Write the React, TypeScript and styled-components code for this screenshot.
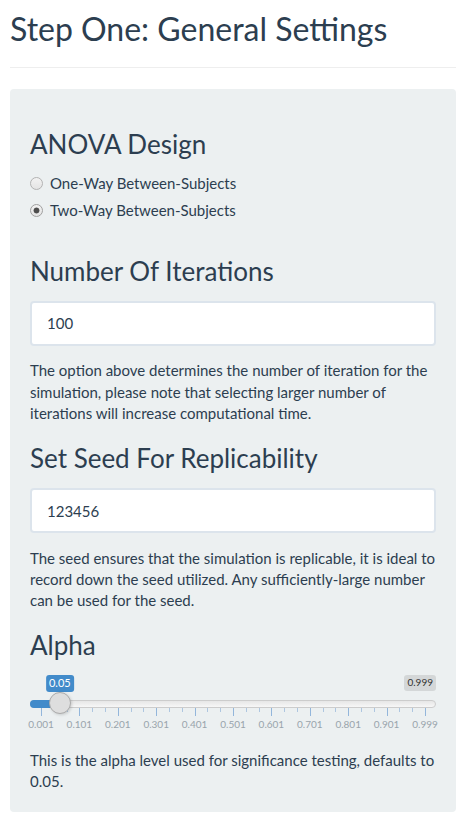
import styled, { createGlobalStyle } from "styled-components";

const GlobalStyle = createGlobalStyle`
  *, *::before, *::after {
    box-sizing: border-box;
  }
  html, body {
    margin: 0;
    padding: 0;
    background: #ffffff;
  }
  body {
    font-family: Lato, "Noto Sans", sans-serif;
    font-size: 15px;
    line-height: 1.428571;
    color: #2c3e50;
  }
`;

const Page = styled.div`
  padding: 0 16px 0 10px;
`;

const PageTitle = styled.h2`
  margin: 10.5px 0 0;
  font-size: 32px;
  line-height: 1.1;
  font-weight: 400;
`;

const Rule = styled.hr`
  margin: 21px 0;
  height: 0;
  border: 0;
  border-top: 1px solid #eeeeee;
`;

const Well = styled.div`
  display: flex;
  flex-direction: column;
  background: #ecf0f1;
  border: 1px solid transparent;
  border-radius: 4px;
  padding: 19px 19px 18px;
`;

const SectionTitle = styled.h3<{ $top: number }>`
  margin: ${(p) => p.$top}px 0 0;
  font-size: 26px;
  line-height: 1.1;
  font-weight: 400;
`;

const RadioList = styled.div`
  display: flex;
  flex-direction: column;
  gap: 5px;
  margin-top: 14.5px;
`;

const RadioLabel = styled.label`
  display: flex;
  align-items: flex-start;
  gap: 7px;
  min-height: 21px;
  line-height: 21.43px;
  cursor: pointer;
`;

const RadioInput = styled.input`
  appearance: none;
  flex: none;
  width: 13px;
  height: 13px;
  margin: 4px 0 0;
  border: 1px solid #b3b3b3;
  border-radius: 50%;
  background: linear-gradient(#f2f2f2, #e4e4e4);

  &:checked {
    background: radial-gradient(circle, #4d4d4d 0 2.6px, transparent 3.3px),
      linear-gradient(#f2f2f2, #e4e4e4);
    border-color: #a0a0a0;
  }
`;

const TextInput = styled.input`
  display: block;
  width: 100%;
  height: 45px;
  margin-top: 15.5px;
  padding: 10px 15px;
  border: 2px solid #dce4ec;
  border-radius: 4px;
  background: #ffffff;
  font-family: inherit;
  font-size: 15px;
  color: #2c3e50;
  outline: none;
`;

const HelpText = styled.p`
  margin: 14.5px 0 0;
`;

/* range slider */

const SliderRoot = styled.div`
  position: relative;
  height: 60px;
  margin-top: 15.5px;
`;

const SliderLine = styled.div`
  position: absolute;
  top: 25px;
  left: 0;
  right: 0;
  height: 8px;
  border: 1px solid #cccccc;
  border-radius: 8px;
  background: linear-gradient(to bottom, #dedede -50%, #ffffff 150%);
`;

const SliderBar = styled.div`
  position: absolute;
  top: 25px;
  left: 0;
  height: 8px;
  border-radius: 8px 0 0 8px;
  background: #428bca;
`;

const SliderHandle = styled.div`
  position: absolute;
  top: 17px;
  width: 22px;
  height: 22px;
  border: 1px solid #ababab;
  border-radius: 50%;
  background: #dedede;
  box-shadow: 1px 1px 3px rgba(0, 0, 0, 0.15);
  transform: translateX(-50%);
`;

const Bubble = styled.span<{ $primary?: boolean }>`
  position: absolute;
  top: 0;
  padding: 1px 3px;
  border-radius: 3px;
  font-size: ${(p) => (p.$primary ? 11 : 10)}px;
  line-height: 1.333;
  white-space: nowrap;
  color: ${(p) => (p.$primary ? "#ffffff" : "#333333")};
  background: ${(p) => (p.$primary ? "#428bca" : "rgba(0, 0, 0, 0.1)")};
`;

const ValueBubble = styled(Bubble)`
  transform: translateX(-50%);
`;

const MaxBubble = styled(Bubble)`
  right: 0;
`;

const Grid = styled.div`
  position: absolute;
  left: 0;
  right: 0;
  bottom: 0;
  height: 27px;
`;

const Tick = styled.span<{ $major: boolean }>`
  position: absolute;
  top: 0;
  width: 1px;
  height: ${(p) => (p.$major ? 8 : 4)}px;
  background: ${(p) => (p.$major ? "#93b6db" : "#aec6e0")};
`;

const TickText = styled.span`
  position: absolute;
  top: 11px;
  font-size: 10px;
  line-height: 10px;
  color: #99a4ac;
  white-space: nowrap;
  transform: translateX(-50%);
`;

const MIN = 0.001;
const MAX = 0.999;
const gridLabels = ["0.001", "0.101", "0.201", "0.301", "0.401", "0.501", "0.601", "0.701", "0.801", "0.901", "0.999"];

const at = (f: number) => `calc(11px + (100% - 22px) * ${f})`;

function AlphaSlider({ value }: { value: number }) {
  const f = (value - MIN) / (MAX - MIN);
  const ticks = Array.from({ length: 31 }, (_, i) => i);
  return (
    <SliderRoot>
      <SliderLine />
      <SliderBar style={{ width: at(f) }} />
      <ValueBubble $primary style={{ left: at(f) }}>
        {value}
      </ValueBubble>
      <MaxBubble>{MAX}</MaxBubble>
      <Grid>
        {ticks.map((i) => (
          <Tick key={i} $major={i % 3 === 0} style={{ left: at(i / 30) }} />
        ))}
        {gridLabels.map((label, k) => (
          <TickText key={label} style={{ left: at(k / 10) }}>
            {label}
          </TickText>
        ))}
      </Grid>
      <SliderHandle style={{ left: at(f) }} />
    </SliderRoot>
  );
}

export default function App() {
  return (
    <Page>
      <GlobalStyle />
      <PageTitle>Step One: General Settings</PageTitle>
      <Rule />
      <Well>
        <SectionTitle $top={21.5}>ANOVA Design</SectionTitle>
        <RadioList>
          <RadioLabel>
            <RadioInput type="radio" name="design" value="one" />
            <span>One-Way Between-Subjects</span>
          </RadioLabel>
          <RadioLabel>
            <RadioInput type="radio" name="design" value="two" defaultChecked />
            <span>Two-Way Between-Subjects</span>
          </RadioLabel>
        </RadioList>

        <SectionTitle $top={35.5}>Number Of Iterations</SectionTitle>
        <TextInput type="number" defaultValue={100} />
        <HelpText>
          The option above determines the number of iteration for the simulation, please note that selecting larger
          number of iterations will increase computational time.
        </HelpText>

        <SectionTitle $top={19.5}>Set Seed For Replicability</SectionTitle>
        <TextInput type="number" defaultValue={123456} />
        <HelpText>
          The seed ensures that the simulation is replicable, it is ideal to record down the seed utilized. Any
          sufficiently-large number can be used for the seed.
        </HelpText>

        <SectionTitle $top={19.5}>Alpha</SectionTitle>
        <AlphaSlider value={0.05} />
        <HelpText>This is the alpha level used for significance testing, defaults to 0.05.</HelpText>
      </Well>
    </Page>
  );
}
